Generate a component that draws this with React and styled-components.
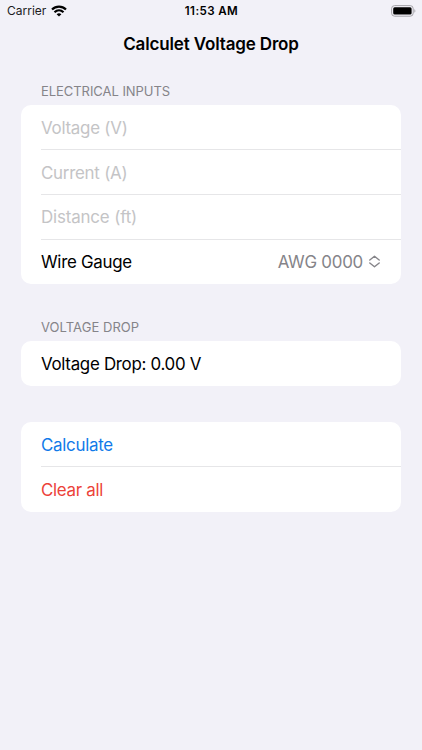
import React from "react";
import styled, { createGlobalStyle } from "styled-components";

const GlobalStyle = createGlobalStyle`
  * {
    box-sizing: border-box;
  }
  body {
    margin: 0;
    background: #f2f1f8;
    font-family: Inter, "Liberation Sans", sans-serif;
  }
`;

const Screen = styled.div`
  width: 100%;
  height: 750px;
  overflow: hidden;
  background: #f2f1f8;
  color: #000;
`;

const StatusBar = styled.div`
  display: grid;
  grid-template-columns: 1fr auto 1fr;
  align-items: center;
  height: 21px;
  padding: 0 6px 0 7px;
`;

const Carrier = styled.div`
  display: flex;
  align-items: center;
  gap: 5px;
  font-size: 12px;
  line-height: 21px;
  color: #1c1c1e;
`;

const Clock = styled.span`
  font-size: 11.6px;
  font-weight: 600;
  line-height: 19px;
  padding-top: 2px;
  letter-spacing: 0.4px;
`;

const BatteryHolder = styled.div`
  display: flex;
  justify-content: flex-end;
`;

const Title = styled.h1`
  margin: 0;
  height: 45px;
  line-height: 46px;
  text-align: center;
  font-size: 17px;
  font-weight: 600;
  letter-spacing: -0.15px;
`;

const Form = styled.main`
  padding: 0 21px;
`;

const SectionHeader = styled.h2`
  margin: 0;
  padding: ${props => props.top} 20px 0;
  height: ${props => props.height};
  line-height: 16px;
  font-size: 13px;
  font-weight: 400;
  color: #858489;
  letter-spacing: ${props => props.spacing};
`;

const Card = styled.section`
  padding-left: 20px;
  margin-top: ${props => props.top || "0"};
  border-radius: 10px;
  background: #fff;
`;

const Row = styled.div`
  display: flex;
  align-items: center;
  justify-content: space-between;
  height: 44.75px;
  padding-right: 21px;
  padding-top: ${props => props.nudge || "1px"};
  font-size: 16.9px;
  letter-spacing: ${props => props.spacing || "-0.28px"};
  color: ${props => props.color || "#000"};

  &:not(:last-child) {
    border-bottom: 1px solid #e6e6e8;
  }
`;

const Picker = styled.span`
  display: flex;
  align-items: center;
  gap: 6px;
  color: #858489;
  letter-spacing: -0.25px;

  svg {
    margin-bottom: 1px;
  }
`;

const WifiIcon = () => (
  <svg width="16" height="12" viewBox="0 0 16 12">
    <g fill="none" stroke="#000" strokeWidth="2.2">
      <path d="M1 4.5C5 .6 11 .6 15 4.5" />
      <path d="M3.5 7.3C6.1 4.8 9.9 4.8 12.5 7.3" />
    </g>
    <path d="M5.6 9.2Q8 7.2 10.4 9.2L8 11.6Z" />
  </svg>
);

const BatteryIcon = () => (
  <svg width="25" height="12" viewBox="0 0 25 12">
    <rect x=".6" y=".6" width="21.6" height="10.6" rx="3" fill="none" stroke="#a4a3a8" />
    <rect x="2.2" y="2.2" width="18.4" height="7.4" rx="1.5" />
    <path d="M23.4 4Q25.4 5.9 23.4 7.8Z" fill="#a4a3a8" />
  </svg>
);

const UpDownIcon = () => (
  <svg width="11" height="13" viewBox="0 0 11 13">
    <path
      d="M.8 5L5.5 1.2L10.2 5M.8 8L5.5 11.8L10.2 8"
      fill="none"
      stroke="#858489"
      strokeWidth="1.4"
      strokeLinecap="round"
      strokeLinejoin="round"
    />
  </svg>
);

const App = () => (
  <Screen>
    <GlobalStyle />
    <StatusBar>
      <Carrier>
        Carrier
        <WifiIcon />
      </Carrier>
      <Clock>11:53 AM</Clock>
      <BatteryHolder>
        <BatteryIcon />
      </BatteryHolder>
    </StatusBar>
    <Title>Calculet Voltage Drop</Title>
    <Form>
      <SectionHeader top="17px" height="39.3px" spacing="-0.05px">ELECTRICAL INPUTS</SectionHeader>
      <Card>
        <Row color="#c4c4c6" spacing="-0.25px" nudge="2px">Voltage (V)</Row>
        <Row color="#c4c4c6" spacing="-0.25px" nudge="2px">Current (A)</Row>
        <Row color="#c4c4c6" spacing="-0.15px">Distance (ft)</Row>
        <Row>
          Wire Gauge
          <Picker>
            AWG 0000
            <UpDownIcon />
          </Picker>
        </Row>
      </Card>
      <SectionHeader top="35px" height="57.2px" spacing="0.05px">VOLTAGE DROP</SectionHeader>
      <Card>
        <Row spacing="-0.3px">Voltage Drop: 0.00 V</Row>
      </Card>
      <Card top="36px">
        <Row color="#117ae9">Calculate</Row>
        <Row color="#ec4239">Clear all</Row>
      </Card>
    </Form>
  </Screen>
);

export default App;
